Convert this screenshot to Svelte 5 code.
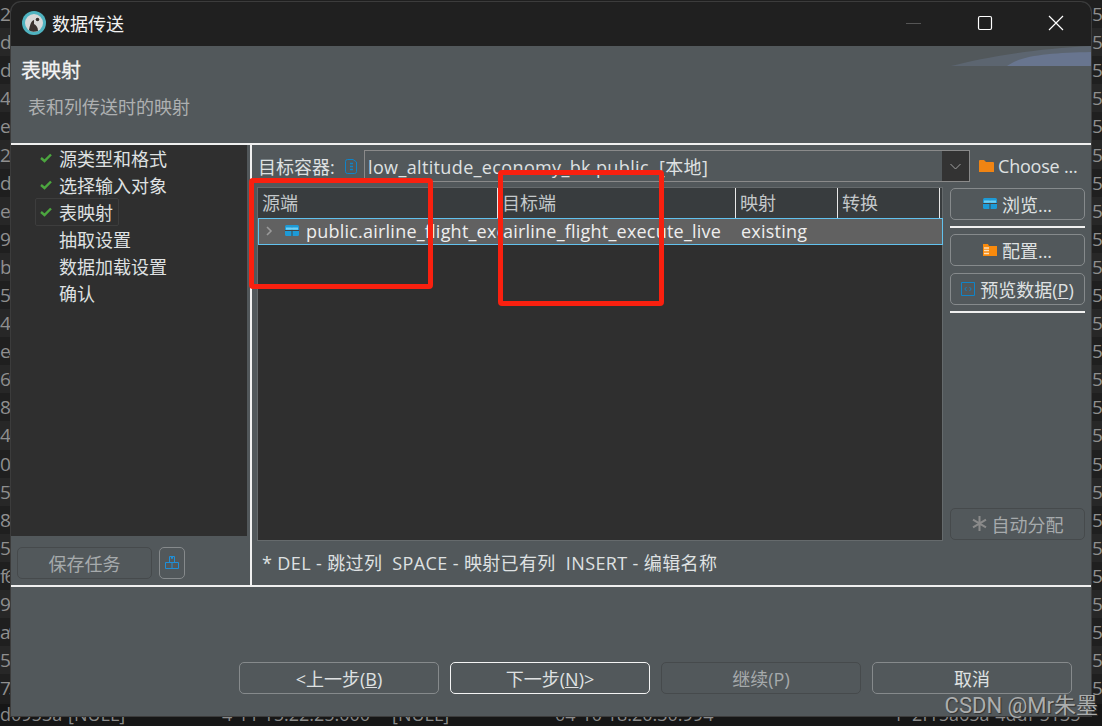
<script>
  const bgRows = [
    ['2f','51'],['de','51'],['d7','51'],['4e','51'],['e8','51'],['2c','51'],['d3','51'],['ea','51'],['9c','51'],
    ['bo','51'],['50','51'],['48','51'],['e4','51'],['69','51'],['8c','51'],['4c','51'],['0a','51'],['57','51'],
    ['84','51'],['51','51'],['f6','51'],['9c','51'],['a9','51'],['5a','51'],['73','51']
  ];
  const steps = [
    { t: '源类型和格式', done: true },
    { t: '选择输入对象', done: true },
    { t: '表映射', done: true, current: true },
    { t: '抽取设置' },
    { t: '数据加载设置' },
    { t: '确认' }
  ];
</script>

<div class="desktop">
  <div class="bgrows">
    {#each bgRows as r, i}
      <div class="bgrow" class:alt={i % 2 === 1}><span class="lead">{r[0]}</span><span>{r[1]}</span></div>
    {/each}
  </div>
  <div class="bgbottom">
    <span class="c1">d0953a</span><span class="c2">[NULL]</span><span class="c3">4-11 15:22:25.000</span><span class="c4">[NULL]</span><span class="c5">04-10 18:20:30.994</span><span class="c6">1</span><span class="c7">2f15a65a-4ddf-5135</span>
  </div>

  <div class="window">
    <div class="titlebar">
      <svg class="appicon" width="24" height="24" viewBox="0 0 24 24">
        <circle cx="12" cy="12" r="12" fill="#4fb3c0"/>
        <circle cx="12" cy="12" r="9" fill="#d8d8d8"/>
        <path d="M7 19 C8 14 9 10 12 9 L12 13 C14 14 16 16 16 20 C12 21 9 21 7 19Z" fill="#3a3230"/>
        <circle cx="15.5" cy="8.5" r="1.8" fill="#3a3230"/>
      </svg>
      <span class="title">数据传送</span>
      <span class="winbtns">
        <svg width="16" height="16" viewBox="0 0 16 16"><path d="M0 8.5H15" stroke="#555" stroke-width="1"/></svg>
        <svg width="16" height="16" viewBox="0 0 16 16"><rect x="1.5" y="1.5" width="13" height="13" rx="1.5" fill="none" stroke="#fff" stroke-width="1.2"/></svg>
        <svg width="16" height="16" viewBox="0 0 16 16"><path d="M1 1L15 15M15 1L1 15" stroke="#fff" stroke-width="1.2"/></svg>
      </span>
    </div>

    <div class="banner">
      <svg class="swoosh" width="140" height="20" viewBox="0 0 140 20">
        <path d="M0 20C30 12 80 3 140 0V20Z" fill="#5c6570"/>
        <path d="M56 20C70 9 100 7 140 6V20Z" fill="#68758f"/>
      </svg>
      <div class="bannertitle">表映射</div>
      <div class="bannersub">表和列传送时的映射</div>
    </div>

    <div class="body">
      <div class="left">
        <div class="tree">
          {#each steps as s}
            <div class="step">
              <span class="stepinner" class:current={s.current}>
                <span class="check">
                  {#if s.done}
                    <svg width="12" height="10" viewBox="0 0 12 10"><path d="M1 5L4.5 8L11 1.5" fill="none" stroke="#4ca63f" stroke-width="2.4"/></svg>
                  {/if}
                </span>
                <span>{s.t}</span>
              </span>
            </div>
          {/each}
        </div>
        <div class="savebar">
          <button class="btn dim save">保存任务</button>
          <button class="btn small">
            <svg width="14" height="16" viewBox="0 0 14 16" fill="none" stroke="#1f8fd8" stroke-width="1"><path d="M4.5 1.5H9.5V7.5H4.5ZM6.5 1.5V3.5H7.5V1.5M.5 7.5H13.5V13.5H.5ZM7 7.5V13.5"/></svg>
          </button>
        </div>
      </div>

      <div class="right">
        <div class="main">
          <div class="target">
            <span class="tlabel">目标容器:</span>
            <svg class="dbicon" width="12" height="15" viewBox="0 0 12 15" fill="none" stroke="#0f84c8" stroke-width="1"><path d="M.5 2.5Q.5.5 2.5.5H8L11.5 3V12.5Q11.5 14.5 9.5 14.5H2.5Q.5 14.5.5 12.5Z"/><path d="M5 4.5H8M5 7.5H8M5 10.5H8" stroke-width="1.5"/></svg>
            <div class="combo">
              <span class="comboval">low_altitude_economy_bk.public&nbsp;&nbsp;[本地]</span>
              <span class="comboarrow"><svg width="11" height="7" viewBox="0 0 11 7"><path d="M.5 1L5.5 6L10.5 1" fill="none" stroke="#a0a0a0"/></svg></span>
            </div>
            <span class="choose">
              <svg width="15" height="12" viewBox="0 0 15 12"><path d="M0 1Q0 0 1 0H5L7 2H14Q15 2 15 3V12H0Z" fill="#f08413"/></svg>
              <span>Choose ...</span>
            </span>
          </div>

          <div class="content">
            <div class="table">
              <div class="thead">
                <span class="th c-src">源端</span>
                <span class="th c-dst">目标端</span>
                <span class="th c-map">映射</span>
                <span class="th c-conv">转换</span>
              </div>
              <div class="tr">
                <span class="td c-src srccell">
                  <svg width="8" height="10" viewBox="0 0 8 10"><path d="M2 1L6 5L2 9" fill="none" stroke="#9a9a9a" stroke-width="1.6"/></svg>
                  <svg class="tblicon" width="14" height="11" viewBox="0 0 14 11"><rect width="14" height="11" rx="1.5" fill="#1d9ad6"/><path d="M0 5.5H14M7 2.5V11" stroke="#444" stroke-width="1"/><path d="M1 2.5H13V4.8H1Z" fill="#6fd0f5"/></svg>
                  <span class="clip">public.airline_flight_execute_live</span>
                </span>
                <span class="td c-dst">airline_flight_execute_live</span>
                <span class="td c-map">existing</span>
                <span class="td c-conv"></span>
              </div>
            </div>

            <div class="side">
              <button class="btn sidebtn">
                <svg width="14" height="11" viewBox="0 0 14 11"><rect width="14" height="11" rx="1.5" fill="#1d9ad6"/><path d="M0 5.5H14M7 2.5V11" stroke="#444" stroke-width="1"/><path d="M1 2.5H13V4.8H1Z" fill="#6fd0f5"/></svg>
                <span>浏览...</span>
              </button>
              <div class="rule"></div>
              <button class="btn sidebtn">
                <svg width="14" height="12" viewBox="0 0 14 12"><path d="M0 0H5L6 2H14V12H0Z" fill="#f98a0c"/><path d="M1 4H6M1 6.5H6M1 9.5H6" stroke="#ffe0b8" stroke-width="1.5"/></svg>
                <span>配置...</span>
              </button>
              <button class="btn preview">
                <svg width="14" height="14" viewBox="0 0 14 14" fill="none" stroke="#0f84c8"><path d="M.5.5H13.5V13.5H.5Z"/><path d="M5.5 5L3.8 7L5.5 9M8.5 5L10.2 7L8.5 9"/></svg>
                <span>预览数据(<u>P</u>)</span>
              </button>
              <div class="rule"></div>
              <div class="spacer"></div>
              <button class="btn dim auto">
                <svg width="15" height="15" viewBox="0 0 15 15" stroke="#8a8a8a" stroke-width="2"><path d="M7.5 0V15M1 3.7L14 11.3M14 3.7L1 11.3"/></svg>
                <span>自动分配</span>
              </button>
            </div>
          </div>

          <div class="hint">* DEL - 跳过列&nbsp;&nbsp;SPACE - 映射已有列&nbsp;&nbsp;INSERT - 编辑名称</div>
        </div>
      </div>
    </div>

    <div class="footer">
      <button class="btn fbtn"><span>&lt;上一步(<u>B</u>)</span></button>
      <button class="btn fbtn primary"><span>下一步(<u>N</u>)&gt;</span></button>
      <button class="btn fbtn dim"><span>继续(P)</span></button>
      <button class="btn fbtn"><span>取消</span></button>
    </div>
  </div>

  <div class="mark redA"></div>
  <div class="mark redB"></div>
  <div class="watermark">CSDN @Mr朱墨</div>
</div>

<style>
  :global(body) { margin: 0; background: #1e1e1e; }
  .desktop {
    position: relative;
    width: 1102px;
    height: 726px;
    overflow: hidden;
    background: #1e1e1e;
    font-family: "Open Sans", "Noto Sans CJK SC", sans-serif;
    font-size: 18px;
    color: #dfe1e2;
  }
  .bgrows { display: flex; flex-direction: column; }
  .bgrow {
    height: 28.1px;
    display: flex;
    justify-content: space-between;
    align-items: center;
    color: #8f8f8f;
    background: #1f1f1f;
    font-size: 19px;
  }
  .bgrow.alt { background: #272727; }
  .bgrow span { width: 10px; overflow: hidden; white-space: nowrap; }
  .bgrow .lead { letter-spacing: -2px; }
  .bgbottom {
    position: absolute;
    left: 0;
    top: 704px;
    width: 1102px;
    height: 22px;
    background: #161616;
    color: #8a8a8a;
    font-size: 18px;
    white-space: nowrap;
  }
  .bgbottom span { position: absolute; top: -2px; }
  .c1 { left: 0; } .c2 { left: 68px; } .c3 { left: 222px; } .c4 { left: 392px; }
  .c5 { left: 555px; } .c6 { left: 893px; } .c7 { left: 912px; }

  .window {
    position: absolute;
    left: 11px;
    top: 2px;
    width: 1080px;
    height: 714px;
    display: flex;
    flex-direction: column;
    background: #52585b;
    border-radius: 10px 10px 0 0;
    box-shadow: 0 0 0 1px #3c3c3c;
    overflow: hidden;
  }
  .titlebar {
    height: 44px;
    box-sizing: border-box;
    flex: none;
    background: #202020;
    display: flex;
    align-items: center;
    padding: 0 0 2px 11px;
    color: #f2f2f2;
  }
  .appicon { margin-right: 6px; }
  .title { font-size: 18px; }
  .winbtns { margin-left: auto; display: flex; gap: 55px; padding-right: 27px; align-items: center; }

  .banner {
    position: relative;
    height: 97px;
    flex: none;
    background: #52585b;
    padding-left: 10px;
  }
  .swoosh { position: absolute; right: 0; top: 0; }
  .bannertitle { font-size: 20px; font-weight: 400; -webkit-text-stroke: .3px #f4f4f4; color: #f4f4f4; padding-top: 12px; line-height: 26px; }
  .bannersub { font-size: 18px; color: #aeb0b1; padding: 10px 0 0 7px; line-height: 26px; }

  .body { flex: 1; min-height: 0; display: flex; border-top: 2px solid #f0f0f0; }
  .left { width: 239px; flex: none; display: flex; flex-direction: column; }
  .tree { flex: 1; background: #2f2f2f; margin-right: 3px; }
  .step { height: 27px; box-sizing: border-box; padding: 0 0 2px 24px; display: flex; align-items: center; white-space: nowrap; }
  .stepinner { display: flex; align-items: center; height: 26px; padding: 0 5px 0 4px; border: 1px solid transparent; border-radius: 2px; }
  .stepinner.current { border-color: #3d3d3d; }
  .check { width: 19px; display: flex; align-items: center; }
  .savebar { height: 49px; flex: none; display: flex; gap: 7px; padding: 11px 0 0 6px; box-sizing: border-box; }
  .save { width: 135px; padding-right: 2px; }
  .small { width: 26px; }

  .right { flex: 1; min-width: 0; border-left: 2px solid #f0f0f0; display: flex; }
  .main { flex: 1; min-width: 0; display: flex; flex-direction: column; padding: 5px 6px 0 5px; }
  .target { display: flex; align-items: center; height: 32px; flex: none; white-space: nowrap; }
  .tlabel { width: 88px; flex: none; box-sizing: border-box; padding-left: 1px; }
  .dbicon { margin-right: 7px; flex: none; }
  .combo {
    width: 606px;
    height: 32px;
    flex: none;
    box-sizing: border-box;
    border: 1px solid #8a8a8a;
    display: flex;
    align-items: center;
    justify-content: space-between;
  }
  .comboval { padding-left: 3px; letter-spacing: .36px; }
  .comboarrow { width: 27px; height: 100%; background: #333; display: flex; align-items: center; justify-content: center; }
  .choose { display: flex; align-items: center; gap: 4px; padding-left: 9px; letter-spacing: -.2px; }

  .content { flex: none; display: flex; gap: 7px; padding-top: 5px; }
  .table {
    width: 686px;
    height: 354px;
    box-sizing: border-box;
    flex: none;
    background: #2f2f2f;
    border: 1px solid #656a6c;
  }
  .thead { display: flex; height: 30px; background: #383c3e; color: #c4c8ca; }
  .th { box-sizing: border-box; border-right: 1px solid #e8e8e8; padding-left: 4px; line-height: 30px; flex: none; }
  .c-src { width: 240px; }
  .c-dst { width: 238px; }
  .c-map { width: 102px; }
  .c-conv { width: 102px; }
  .tr {
    display: flex;
    height: 27px;
    box-sizing: border-box;
    margin-right: -1px;
    background: #616161;
    border: 1px solid #62c2ee;
    align-items: center;
    color: #eeeeee;
    white-space: nowrap;
  }
  .td { box-sizing: border-box; flex: none; padding: 0 0 2px 5px; overflow: hidden; letter-spacing: .22px; }
  .tr .c-src { width: 239px; }
  .srccell { display: flex; align-items: center; padding-left: 6px; }
  .tblicon { margin-left: 12px; margin-right: 7px; flex: none; }
  .clip { overflow: hidden; flex: 1; min-width: 0; }

  .side { width: 135px; flex: none; display: flex; flex-direction: column; height: 352px; margin-top: 1px; }
  .side .btn { flex: none; width: 135px; }
  .sidebtn { padding-left: 6px; }
  .side .preview { margin-top: 7px; padding: 0 0 1px; gap: 5px; }
  .rule { height: 2px; margin: 6px 0; background: #f0f0f0; flex: none; }
  .spacer { flex: 1; }

  .hint { flex: none; padding-left: 5px; line-height: 26px; margin-top: 9px; letter-spacing: .37px; white-space: nowrap; }

  .btn {
    box-sizing: border-box;
    height: 32px;
    border: 1px solid #868a8c;
    border-radius: 5px;
    background: transparent;
    color: #dfe1e2;
    font: inherit;
    display: flex;
    align-items: center;
    justify-content: center;
    gap: 5px;
    padding: 0 0 1px;
    white-space: nowrap;
  }
  .btn.dim { border-color: #464a4c; color: #a6aaac; }
  .small { border-color: #868a8c; }

  .footer {
    height: 131px;
    flex: none;
    box-sizing: border-box;
    border-top: 2px solid #f0f0f0;
    display: flex;
    gap: 11px;
    padding: 75px 0 0 228px;
  }
  .fbtn { width: 200px; height: 32px; }
  .primary { border-color: #f4f4f4; }

  .mark {
    position: absolute;
    box-sizing: border-box;
    border: 5px solid #f9200f;
    border-radius: 4px;
  }
  .redA { left: 249px; top: 178px; width: 184px; height: 111px; }
  .redB { left: 498px; top: 170px; width: 166px; height: 136px; }
  .watermark {
    position: absolute;
    right: 4px;
    top: 687px;
    color: #acaeae;
    font-family: "Roboto", "Noto Sans CJK SC", sans-serif;
    font-size: 22px;
    text-shadow: 1px 1px 1px #333;
    white-space: nowrap;
  }
</style>
